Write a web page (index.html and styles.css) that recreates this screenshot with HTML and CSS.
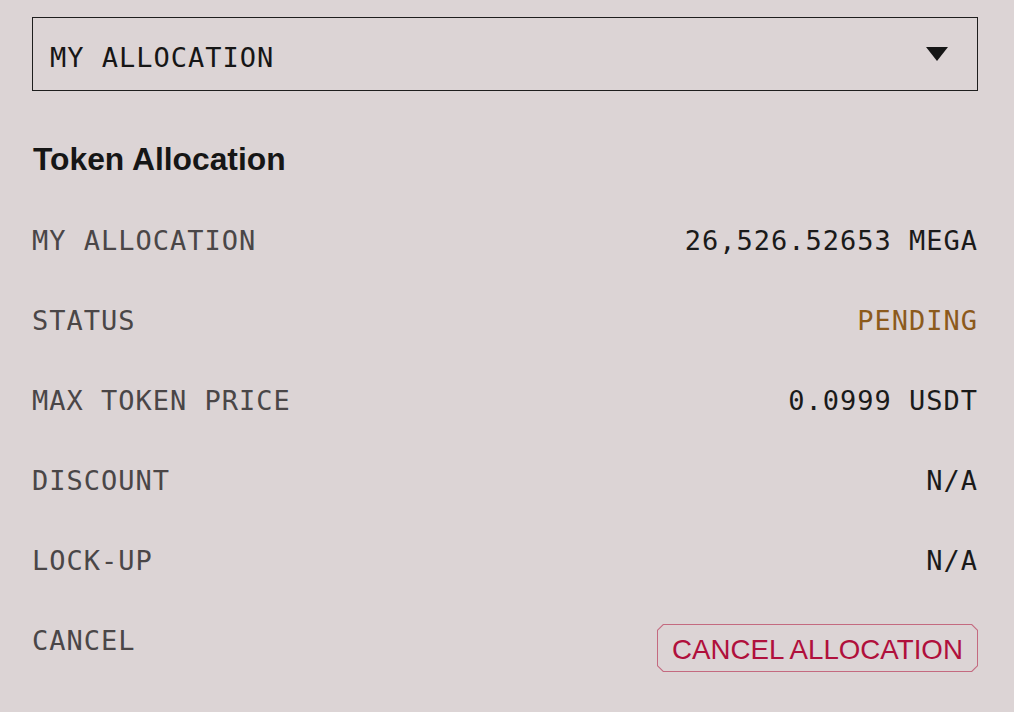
FILE: index.html
```html
<!DOCTYPE html>
<html>
<head>
<meta charset="utf-8">
<link rel="stylesheet" href="styles.css">
</head>
<body>
<div class="panel">
  <div class="select">
    <span class="select-label">MY ALLOCATION</span>
    <svg class="caret" width="24" height="16" viewBox="0 0 24 16"><path d="M1 1 H23 L12 15 Z" fill="#161616"/></svg>
  </div>
  <h2 class="title">Token Allocation</h2>
  <div class="rows">
    <div class="row"><span class="label">MY ALLOCATION</span><span class="value">26,526.52653 MEGA</span></div>
    <div class="row"><span class="label">STATUS</span><span class="value pending">PENDING</span></div>
    <div class="row"><span class="label">MAX TOKEN PRICE</span><span class="value">0.0999 USDT</span></div>
    <div class="row"><span class="label">DISCOUNT</span><span class="value">N/A</span></div>
    <div class="row"><span class="label">LOCK-UP</span><span class="value">N/A</span></div>
    <div class="row"><span class="label">CANCEL</span><button class="cancel-btn"><span class="cancel-inner">CANCEL ALLOCATION</span></button></div>
  </div>
</div>
</body>
</html>
```
FILE: styles.css
```css
html, body {
  margin: 0;
  padding: 0;
  background: #dcd4d5;
}
.panel {
  padding: 17px 36px 0 32px;
  width: 946px;
}
.select {
  height: 72px;
  border: 1px solid #1e1e1e;
  display: flex;
  align-items: center;
  justify-content: space-between;
  padding: 0 28px 0 17px;
}
.select-label, .label, .value {
  font-family: "DejaVu Sans Mono", monospace;
  font-size: 27px;
  letter-spacing: 1px;
}
.select-label {
  color: #161616;
  padding-top: 6px;
}
.caret {
  display: block;
}
.title {
  font-family: "Liberation Sans", Arial, sans-serif;
  font-weight: bold;
  font-size: 31.8px;
  color: #161616;
  margin: 49px 0 0 1px;
  line-height: 38px;
}
.rows {
  display: flex;
  flex-direction: column;
  margin-top: 48px;
}
.row {
  height: 80px;
  display: flex;
  align-items: flex-start;
  justify-content: space-between;
}
.label {
  color: #4a4647;
  line-height: 30px;
}
.value {
  color: #1a1a1a;
  line-height: 30px;
}
.pending {
  color: #8c5a1c;
}
.cancel-btn {
  --c: 6px;
  clip-path: polygon(var(--c) 0, calc(100% - var(--c)) 0, 100% var(--c), 100% calc(100% - var(--c)), calc(100% - var(--c)) 100%, var(--c) 100%, 0 calc(100% - var(--c)), 0 var(--c));
  background: #c46a80;
  border: 0;
  padding: 1px;
  height: 48px;
  width: 321px;
  margin-top: -2px;
  display: flex;
}
.cancel-inner {
  --c: 5.6px;
  clip-path: polygon(var(--c) 0, calc(100% - var(--c)) 0, 100% var(--c), 100% calc(100% - var(--c)), calc(100% - var(--c)) 100%, var(--c) 100%, 0 calc(100% - var(--c)), 0 var(--c));
  flex: 1;
  background: #dcd4d5;
  display: flex;
  align-items: center;
  justify-content: center;
  font-family: "Liberation Sans", Arial, sans-serif;
  font-size: 27.7px;
  white-space: nowrap;
  color: #b0103c;
  padding-top: 3px;
}
```
